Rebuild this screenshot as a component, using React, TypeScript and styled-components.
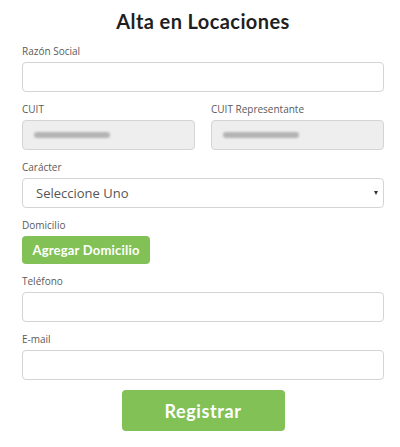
import React from "react";
import styled, { createGlobalStyle } from "styled-components";

const GlobalStyle = createGlobalStyle`
  body {
    margin: 0;
    background: #fff;
    font-family: "Open Sans", "Liberation Sans", sans-serif;
  }
`;

const App = () => {
  return (
    <>
      <GlobalStyle />
      <Page>
        <Title>Alta en Locaciones</Title>
        <Form>
          <Field>
            <Label>Razón Social</Label>
            <Input />
          </Field>

          <Row>
            <Field>
              <Label>CUIT</Label>
              <Locked>
                <Hidden />
              </Locked>
            </Field>
            <Field>
              <Label>CUIT Representante</Label>
              <Locked>
                <Hidden />
              </Locked>
            </Field>
          </Row>

          <Field>
            <Label>Carácter</Label>
            <Select>
              <span>Seleccione Uno</span>
              <Caret />
            </Select>
          </Field>

          <Field>
            <Label>Domicilio</Label>
            <GreenButton type="button" $size="small">
              Agregar Domicilio
            </GreenButton>
          </Field>

          <Field>
            <Label>Teléfono</Label>
            <Input />
          </Field>

          <Field>
            <Label>E-mail</Label>
            <Input />
          </Field>

          <Footer>
            <GreenButton type="button" $size="large">
              Registrar
            </GreenButton>
          </Footer>
        </Form>
      </Page>
    </>
  );
};

export default App;

const Page = styled.div`
  width: 400px;
  height: 447px;
  box-sizing: border-box;
  padding: 6px 16px 0 22px;
`;

const Title = styled.h1`
  margin: 0;
  height: 38px;
  font-family: "Lato", "Liberation Sans", sans-serif;
  font-weight: 700;
  font-size: 20px;
  line-height: 30px;
  text-align: center;
  color: #1f1f1f;
  letter-spacing: 0.4px;
`;

const Form = styled.form`
  display: flex;
  flex-direction: column;
  gap: 10px;
`;

const Row = styled.div`
  display: grid;
  grid-template-columns: 1fr 1fr;
  column-gap: 16px;
`;

const Field = styled.div`
  display: flex;
  flex-direction: column;
  align-items: flex-start;
  gap: 4px;
`;

const Label = styled.label`
  font-size: 10px;
  line-height: 14px;
  color: #5a5a5a;
`;

const Input = styled.input`
  width: 100%;
  height: 30px;
  box-sizing: border-box;
  border: 1px solid #d4d4d4;
  border-radius: 4px;
  background: #fff;
  outline: none;
  padding: 0 12px;
`;

const Locked = styled.div`
  width: 100%;
  height: 30px;
  box-sizing: border-box;
  border: 1px solid #d4d4d4;
  border-radius: 4px;
  background: #eeeeee;
  display: flex;
  align-items: center;
  padding-left: 11px;
`;

const Hidden = styled.span`
  display: block;
  width: 76px;
  height: 6px;
  border-radius: 3px;
  background: #b4b4b4;
  filter: blur(1px);
`;

const Select = styled.div`
  width: 100%;
  height: 30px;
  box-sizing: border-box;
  border: 1px solid #d4d4d4;
  border-radius: 4px;
  background: #fff;
  display: flex;
  align-items: center;
  justify-content: space-between;
  padding: 0 5px 0 13px;
  font-size: 13px;
  color: #555;
`;

const Caret = styled.span`
  width: 0;
  height: 0;
  border-left: 2.5px solid transparent;
  border-right: 2.5px solid transparent;
  border-top: 4px solid #333;
`;

const GreenButton = styled.button<{ $size: "small" | "large" }>`
  border: none;
  border-radius: 4px;
  background: #82c155;
  color: #fff;
  font-family: "Lato", "Liberation Sans", sans-serif;
  font-weight: 700;
  cursor: pointer;
  width: ${(p) => (p.$size === "large" ? "163px" : "128px")};
  height: ${(p) => (p.$size === "large" ? "41px" : "28px")};
  font-size: ${(p) => (p.$size === "large" ? "18px" : "13px")};
  letter-spacing: ${(p) => (p.$size === "large" ? "0.6px" : "0.2px")};
`;

const Footer = styled.div`
  display: flex;
  justify-content: center;
`;
